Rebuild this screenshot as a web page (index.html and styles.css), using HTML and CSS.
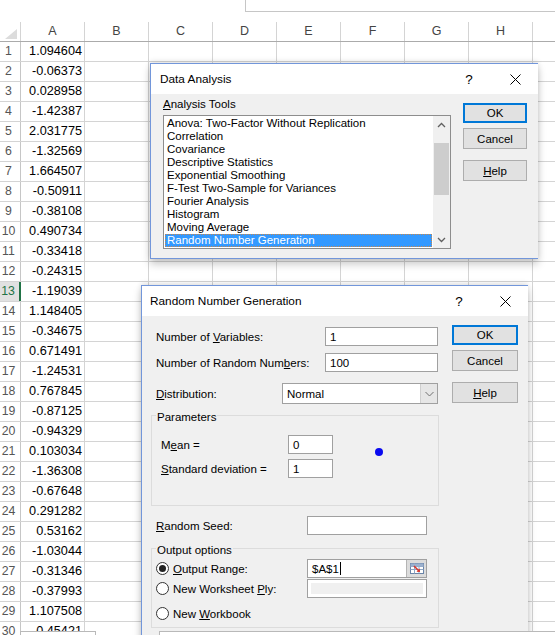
FILE: index.html
```html
<!DOCTYPE html>
<html>
<head>
<meta charset="utf-8">
<link rel="stylesheet" href="styles.css">
</head>
<body>
<div class="topbar"><div class="topbar-gap"></div><div class="formula-box"></div></div>
<div class="sheet">
  <div class="colhead">
    <div class="corner"><svg width="12" height="10" viewBox="0 0 12 10"><polygon points="12,0 12,10 0,10" fill="#dcdcdc"/></svg></div>
    <div class="ch">A</div><div class="ch">B</div><div class="ch">C</div><div class="ch">D</div><div class="ch">E</div><div class="ch">F</div><div class="ch">G</div><div class="ch">H</div>
    <div class="ch-rest"></div>
  </div>
  <div class="row"><div class="rh">1</div><div class="cell">1.094604</div><div class="rest"></div></div>
  <div class="row"><div class="rh">2</div><div class="cell">-0.06373</div><div class="rest"></div></div>
  <div class="row"><div class="rh">3</div><div class="cell">0.028958</div><div class="rest"></div></div>
  <div class="row"><div class="rh">4</div><div class="cell">-1.42387</div><div class="rest"></div></div>
  <div class="row"><div class="rh">5</div><div class="cell">2.031775</div><div class="rest"></div></div>
  <div class="row"><div class="rh">6</div><div class="cell">-1.32569</div><div class="rest"></div></div>
  <div class="row"><div class="rh">7</div><div class="cell">1.664507</div><div class="rest"></div></div>
  <div class="row"><div class="rh">8</div><div class="cell">-0.50911</div><div class="rest"></div></div>
  <div class="row"><div class="rh">9</div><div class="cell">-0.38108</div><div class="rest"></div></div>
  <div class="row"><div class="rh">10</div><div class="cell">0.490734</div><div class="rest"></div></div>
  <div class="row"><div class="rh">11</div><div class="cell">-0.33418</div><div class="rest"></div></div>
  <div class="row"><div class="rh">12</div><div class="cell">-0.24315</div><div class="rest"></div></div>
  <div class="row"><div class="rh sel">13</div><div class="cell">-1.19039</div><div class="rest"></div></div>
  <div class="row"><div class="rh">14</div><div class="cell">1.148405</div><div class="rest"></div></div>
  <div class="row"><div class="rh">15</div><div class="cell">-0.34675</div><div class="rest"></div></div>
  <div class="row"><div class="rh">16</div><div class="cell">0.671491</div><div class="rest"></div></div>
  <div class="row"><div class="rh">17</div><div class="cell">-1.24531</div><div class="rest"></div></div>
  <div class="row"><div class="rh">18</div><div class="cell">0.767845</div><div class="rest"></div></div>
  <div class="row"><div class="rh">19</div><div class="cell">-0.87125</div><div class="rest"></div></div>
  <div class="row"><div class="rh">20</div><div class="cell">-0.94329</div><div class="rest"></div></div>
  <div class="row"><div class="rh">21</div><div class="cell">0.103034</div><div class="rest"></div></div>
  <div class="row"><div class="rh">22</div><div class="cell">-1.36308</div><div class="rest"></div></div>
  <div class="row"><div class="rh">23</div><div class="cell">-0.67648</div><div class="rest"></div></div>
  <div class="row"><div class="rh">24</div><div class="cell">0.291282</div><div class="rest"></div></div>
  <div class="row"><div class="rh">25</div><div class="cell">0.53162</div><div class="rest"></div></div>
  <div class="row"><div class="rh">26</div><div class="cell">-1.03044</div><div class="rest"></div></div>
  <div class="row"><div class="rh">27</div><div class="cell">-0.31346</div><div class="rest"></div></div>
  <div class="row"><div class="rh">28</div><div class="cell">-0.37993</div><div class="rest"></div></div>
  <div class="row"><div class="rh">29</div><div class="cell">1.107508</div><div class="rest"></div></div>
  <div class="row"><div class="rh">30</div><div class="cell">-0.45421</div><div class="rest"></div></div>
</div>

<div class="dialog dlg-analysis">
  <div class="titlebar">
    <div class="title title-da">Data Analysis</div>
    <div class="tb-btn q">?</div>
    <div class="tb-btn"><svg width="11" height="11" viewBox="0 0 11 11"><path d="M0.5 0.5 L10.5 10.5 M10.5 0.5 L0.5 10.5" stroke="#000" stroke-width="1" fill="none"/></svg></div>
  </div>
  <div class="da-body">
    <div class="da-left">
      <div class="da-label"><u>A</u>nalysis Tools</div>
      <div class="listbox">
        <div class="items">
          <div class="item">Anova: Two-Factor Without Replication</div>
          <div class="item">Correlation</div>
          <div class="item">Covariance</div>
          <div class="item">Descriptive Statistics</div>
          <div class="item">Exponential Smoothing</div>
          <div class="item">F-Test Two-Sample for Variances</div>
          <div class="item">Fourier Analysis</div>
          <div class="item">Histogram</div>
          <div class="item">Moving Average</div>
          <div class="item selected">Random Number Generation</div>
        </div>
        <div class="vscroll">
          <div class="sb-arrow"><svg width="9" height="6" viewBox="0 0 9 6"><path d="M1 5 L4.5 1.5 L8 5" stroke="#606060" stroke-width="1.3" fill="none"/></svg></div>
          <div class="sb-track"><div class="sb-thumb"></div></div>
          <div class="sb-arrow"><svg width="9" height="6" viewBox="0 0 9 6"><path d="M1 1 L4.5 4.5 L8 1" stroke="#606060" stroke-width="1.3" fill="none"/></svg></div>
        </div>
      </div>
    </div>
    <div class="btn-col btn-col-da">
      <div class="btn default">OK</div>
      <div class="btn cancel">Cancel</div>
      <div class="btn help"><u>H</u>elp</div>
    </div>
  </div>
</div>

<div class="dialog dlg-rng">
  <div class="titlebar">
    <div class="title title-rng">Random Number Generation</div>
    <div class="tb-btn q">?</div>
    <div class="tb-btn"><svg width="11" height="11" viewBox="0 0 11 11"><path d="M0.5 0.5 L10.5 10.5 M10.5 0.5 L0.5 10.5" stroke="#000" stroke-width="1" fill="none"/></svg></div>
  </div>
  <div class="rng-body">
    <div class="rng-left">
      <div class="frow r1"><div class="lbl w169">Number of <u>V</u>ariables:</div><div class="tb w113">1</div></div>
      <div class="frow r2"><div class="lbl w169">Number of Random Num<u>b</u>ers:</div><div class="tb w113">100</div></div>
      <div class="frow r3"><div class="lbl w126"><u>D</u>istribution:</div>
        <div class="select"><div class="sel-text">Normal</div><div class="dd"><svg width="9" height="6" viewBox="0 0 9 6"><path d="M0.5 1 L4.5 5 L8.5 1" stroke="#707070" stroke-width="1" fill="none"/></svg></div></div>
      </div>
      <div class="group params">
        <div class="legend">Parameters</div>
        <div class="prow p1"><div class="lbl w127">M<u>e</u>an =</div><div class="tb w45">0</div></div>
        <div class="prow p2"><div class="lbl w127"><u>S</u>tandard deviation =</div><div class="tb w45">1</div></div>
        <div class="dot"></div>
      </div>
      <div class="frow r4"><div class="lbl w151"><u>R</u>andom Seed:</div><div class="tb w120"></div></div>
      <div class="group output">
        <div class="legend">Output options</div>
        <div class="orow o1"><div class="radio checked"><div class="radio-dot"></div></div><div class="lbl w134"><u>O</u>utput Range:</div>
          <div class="tb w120 range"><span class="range-text">$A$1</span><span class="caret"></span><span class="range-fill"></span>
            <div class="refbtn"><svg width="16" height="13" viewBox="0 0 16 13">
              <rect x="1.5" y="1.5" width="13" height="10" fill="#fff" stroke="#6a84a8"/>
              <path d="M1.5 4.5 H14.5 M1.5 7.5 H14.5 M5.5 1.5 V11.5 M10 1.5 V11.5" stroke="#8fa6c4" stroke-width="1"/>
              <rect x="1.5" y="1.5" width="13" height="3" fill="#9bb1cf"/>
              <path d="M5 4 L10 9" stroke="#d8342a" stroke-width="1.6"/>
              <path d="M7.5 9.8 L11 10 L10.8 6.5 Z" fill="#d8342a"/>
            </svg></div>
          </div>
        </div>
        <div class="orow o2"><div class="radio"></div><div class="lbl w134">New Worksheet <u>P</u>ly:</div><div class="tb w120 disabled"><div class="dis-fill"></div></div></div>
        <div class="orow o3"><div class="radio"></div><div class="lbl">New <u>W</u>orkbook</div></div>
      </div>
    </div>
    <div class="btn-col btn-col-rng">
      <div class="btn default">OK</div>
      <div class="btn cancel">Cancel</div>
      <div class="btn help"><u>H</u>elp</div>
    </div>
  </div>
</div>

<div class="edge edge-left"></div>
<div class="edge edge-right"></div>
</body>
</html>
```

FILE: styles.css
```css
* { box-sizing: border-box; }
html, body { margin: 0; padding: 0; }
body {
  width: 555px;
  height: 635px;
  overflow: hidden;
  position: relative;
  background: #fff;
  color: #000;
  font-family: "Liberation Sans", Arial, sans-serif;
}

/* ---------- spreadsheet ---------- */
.topbar { display: flex; height: 22px; }
.topbar-gap { width: 245px; }
.formula-box { flex: 1; height: 12px; border-left: 1px solid #c6c6c6; border-bottom: 1px solid #c6c6c6; }

.colhead { display: flex; height: 20px; border-bottom: 1px solid #ababab; }
.corner {
  width: 21px; border-right: 1px solid #d4d4d4;
  display: flex; align-items: flex-end; justify-content: flex-end;
  padding: 0 3px 2px 0;
}
.corner svg { display: block; }
.ch {
  width: 64px; border-right: 1px solid #d4d4d4;
  text-align: center; line-height: 19px; font-size: 12.5px; color: #444;
}
.ch-rest { flex: 1; }

.row { display: flex; height: 20px; border-bottom: 1px solid #d4d4d4; }
.rh {
  width: 21px; border-right: 1px solid #c6c6c6;
  font-size: 12.3px; color: #555; text-align: center; padding-right: 3px;
  line-height: 19px; white-space: nowrap;
}
.rh.sel { background: #e1e1e1; color: #217346; border-right: 2px solid #217346; }
.cell {
  width: 64px; border-right: 1px solid #d4d4d4;
  text-align: right; padding-right: 2px; font-size: 12.7px; line-height: 19px;
}
.rest { flex: 1; background-image: repeating-linear-gradient(to right, transparent 0 63px, #d4d4d4 63px 64px); }

/* ---------- dialogs ---------- */
.dialog {
  position: absolute;
  background: #f0f0f0;
  border: 1px solid #7296da;
  border-right: none;
  box-shadow: 0 5px 8px rgba(0,0,0,0.22), 0 -2px 5px rgba(0,0,0,0.10);
  font-size: 11.5px;
}
.dlg-analysis { left: 150px; top: 63px; width: 388px; height: 196px; }
.dlg-rng { left: 141px; top: 285px; width: 387px; height: 370px; }

.titlebar { height: 30px; background: #fff; display: flex; align-items: center; }
.title { flex: 1; font-size: 11.8px; }
.title-da { padding-left: 9px; }
.title-rng { padding-left: 8px; }
.tb-btn { width: 46px; height: 30px; display: flex; align-items: center; justify-content: center; }
.tb-btn.q { font-size: 13.5px; }

.btn-col { display: flex; flex-direction: column; padding-top: 9px; }
.btn-col-da { width: 64px; margin-left: 12px; }
.btn-col-rng { width: 66px; margin-left: 13px; }
.btn {
  height: 21px; border: 1px solid #adadad; background: #e1e1e1;
  display: flex; align-items: center; justify-content: center;
}
.btn.default { height: 20px; border: 2px solid #0078d7; }
.btn.cancel { margin-top: 5px; }
.btn.help { margin-top: 11px; }

/* data analysis */
.da-body { display: flex; padding-left: 12px; }
.da-left { width: 288px; }
.da-label { margin-top: 3px; line-height: 14px; }
.listbox { margin-top: 4px; height: 134px; display: flex; border: 1px solid #8d8d8d; background: #fff; }
.items { flex: 1; padding: 1px 1px 0 1px; overflow: hidden; }
.item { line-height: 13px; height: 13px; padding-left: 2px; white-space: nowrap; }
.item.selected { background: #3399ff; color: #fff; outline: 1px dotted #c9874a; outline-offset: -1px; }
.vscroll { width: 17px; background: #f0f0f0; display: flex; flex-direction: column; }
.sb-arrow { height: 17px; display: flex; align-items: center; justify-content: center; }
.sb-arrow svg { display: block; }
.sb-track { flex: 1; }
.sb-thumb { margin: 10px 1px 0; height: 52px; background: #cdcdcd; }

/* random number generation */
.rng-body { display: flex; }
.rng-left { width: 297px; }
.frow { display: flex; align-items: center; padding-left: 14px; }
.lbl { flex: none; white-space: nowrap; }
.w169 { width: 169px; }
.w126 { width: 126px; }
.w127 { width: 127px; }
.w151 { width: 151px; }
.w134 { width: 134px; }
.w113 { width: 113px; }
.w120 { width: 120px; }
.w45 { width: 45px; }
.r1 { margin-top: 11px; }
.r2 { margin-top: 7px; }
.r3 { margin-top: 11px; }
.r4 { margin-top: 10px; }

.tb {
  flex: none; height: 19px; border: 1px solid #a0a0a0; background: #fff;
  padding-left: 4px; display: flex; align-items: center;
}
.select { width: 156px; height: 21px; border: 1px solid #a0a0a0; background: #fff; display: flex; }
.sel-text { flex: 1; padding-left: 4px; display: flex; align-items: center; }
.dd { width: 17px; background: #e6e6e6; border-left: 1px solid #cfcfcf; display: flex; align-items: center; justify-content: center; }
.dd svg { display: block; }

.group {
  position: relative;
  margin-left: 9px; width: 288px;
  border: 1px solid #dcdcdc;
  display: flex; flex-direction: column; align-items: flex-start;
}
.params { margin-top: 11px; height: 91px; }
.output { margin-top: 13px; height: 80px; }
.legend { margin: -6px 0 0 4px; padding: 0 1px; background: #f0f0f0; line-height: 14px; }
.prow { display: flex; align-items: center; padding-left: 9px; }
.p1 { margin-top: 11px; }
.p2 { margin-top: 5px; }
.dot {
  position: absolute; left: 223px; top: 32px;
  width: 8px; height: 8px; border-radius: 50%; background: #0a0af0;
}

.orow { display: flex; align-items: center; padding-left: 4px; height: 19px; }
.o1 { margin-top: 2px; }
.o2 { margin-top: 1px; }
.o3 { margin-top: 6px; }
.radio {
  flex: none; width: 13px; height: 13px; margin-right: 4px;
  border: 1px solid #333; border-radius: 50%; background: #fff;
  display: flex; align-items: center; justify-content: center;
}
.radio-dot { width: 7px; height: 7px; border-radius: 50%; background: #222; }

.range { padding-right: 0; }
.range-text { flex: none; }
.caret { width: 1px; height: 13px; background: #000; margin-left: 1px; }
.range-fill { flex: 1; }
.refbtn {
  width: 20px; height: 17px; background: #dcdcdc; border-left: 1px solid #b4b4b4;
  display: flex; align-items: center; justify-content: center;
}
.refbtn svg { display: block; }
.disabled { padding: 3px; }
.dis-fill { width: 100%; height: 100%; background: #f0f0f0; }

/* bottom edge pieces */
.edge { position: absolute; top: 631px; height: 10px; background: #fff; border-top: 1px solid #b9b9b9; }
.edge-left { left: 20px; width: 76px; border-right: 1px solid #b9b9b9; border-left: 1px solid #b9b9b9; }
.edge-right { left: 159px; right: 0; border-left: 1px solid #b9b9b9; }
```
